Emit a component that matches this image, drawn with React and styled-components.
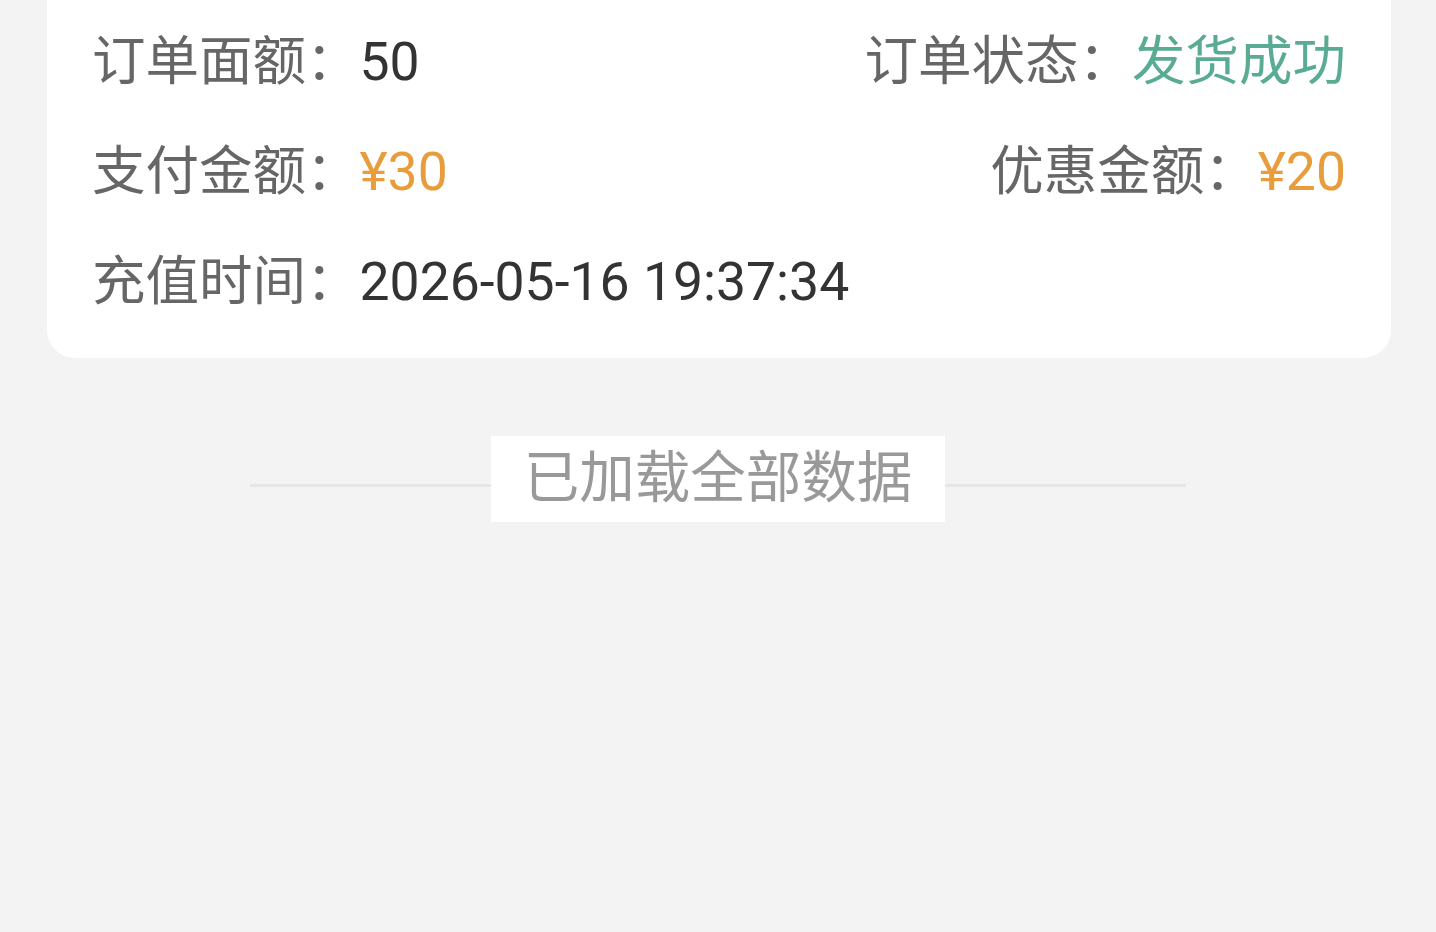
import React from "react"
import styled, {createGlobalStyle} from "styled-components";

const GlobalStyle = createGlobalStyle`
    html, body {
        margin: 0;
        padding: 0;
        background: #f3f3f3;
        font-family: Roboto, "Noto Sans CJK SC", sans-serif;
    }
`

const rows = [
    [
        {label: "订单面额：", value: "50", tone: "plain"},
        {label: "订单状态：", value: "发货成功", tone: "green"},
    ],
    [
        {label: "支付金额：", value: "¥30", tone: "orange"},
        {label: "优惠金额：", value: "¥20", tone: "orange"},
    ],
    [
        {label: "充值时间：", value: "2026-05-16 19:37:34", tone: "plain"},
    ],
]

const App = () => {
    return <Page>
        <GlobalStyle/>
        <Card>
            {
                rows.map((row, i) => (
                    <Row key={i}>
                        {row.map((item, j) => (
                            <Field key={j}>
                                <Label>{item.label}</Label>
                                <Value tone={item.tone}>{item.value}</Value>
                            </Field>
                        ))}
                    </Row>
                ))
            }
        </Card>
        <Divider>
            <Line/>
            <EndText>已加载全部数据</EndText>
            <Line/>
        </Divider>
    </Page>
}
export default App


const colors = {
    plain: "#333333",
    green: "#5aab94",
    orange: "#e89d3c",
}

const Page = styled.div`
    min-height: 932px;
    overflow: hidden;
    background: #f3f3f3;
`

const Card = styled.div`
    margin: -30px 45px 0 47px;
    padding: 37px 45px 21px 45px;
    background: #ffffff;
    border-radius: 28px;
`

const Row = styled.div`
    display: flex;
    justify-content: space-between;
    align-items: center;
    height: 110px;
`

const Field = styled.div`
    display: flex;
    align-items: center;
    font-size: 53.5px;
    line-height: 110px;
    white-space: nowrap;
`

const Label = styled.span`
    color: #666666;
`

const Value = styled.span`
    color: ${props => colors[props.tone]};
`

const Divider = styled.div`
    display: flex;
    align-items: center;
    width: 936px;
    margin: 78px auto 0;
`

const Line = styled.div`
    flex: 1;
    height: 3px;
    margin-top: 12px;
    background: #e6e6e6;
`

const EndText = styled.div`
    padding: 0 33px;
    height: 86px;
    line-height: 86px;
    background: #ffffff;
    color: #999999;
    font-size: 55.5px;
`
